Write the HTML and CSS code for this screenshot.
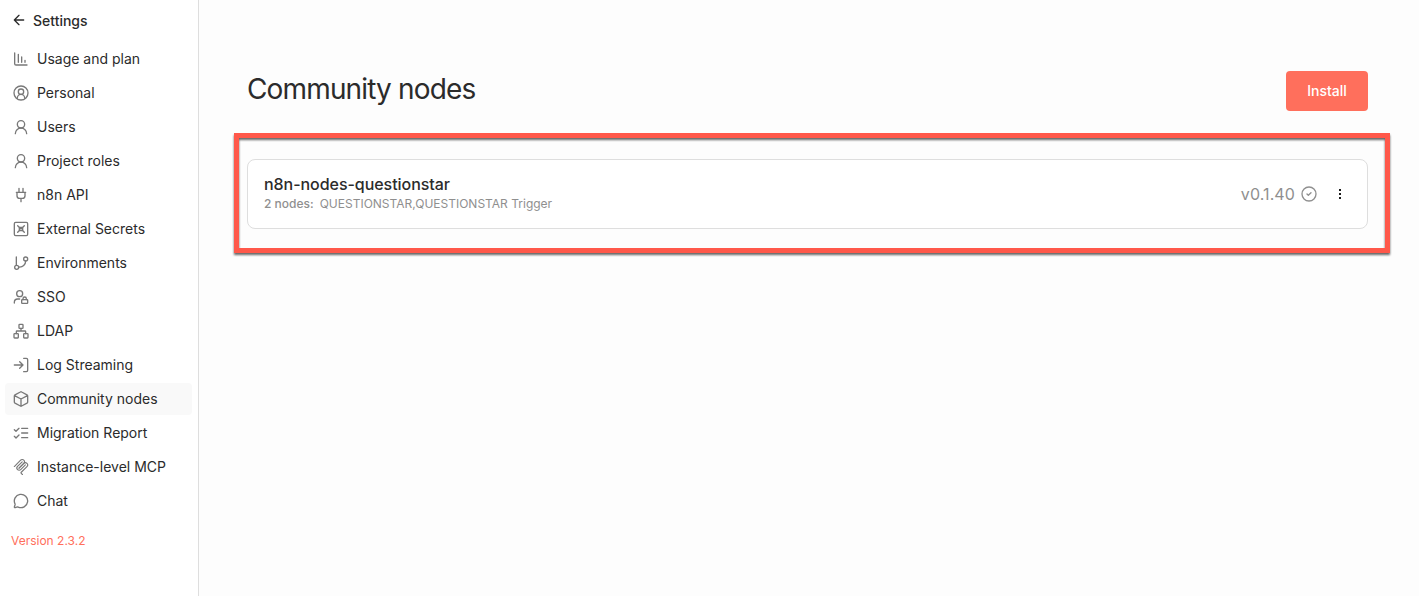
FILE: index.html
```
<!DOCTYPE html>
<html lang="en">

<head>
    <meta charset="UTF-8">
    <meta name="viewport" content="width=device-width, initial-scale=1.0">
    <title>Community nodes</title>
    <link rel="stylesheet" href="styles.css">
</head>

<body>
    <aside class="sidebar">
        <a class="back">
            <svg class="icon" viewBox="0 0 24 24"><path d="m12 19-7-7 7-7M19 12H5"/></svg>
            <span>Settings</span>
        </a>
        <nav class="menu">
            <a class="item">
                <svg class="icon" viewBox="0 0 24 24"><path d="M2.5 3v16a2 2 0 0 0 2 2H21M8 17V5M13 17V9M18 17v-3"/></svg>
                <span>Usage and plan</span>
            </a>
            <a class="item">
                <svg class="icon" viewBox="0 0 24 24"><circle cx="12" cy="12" r="10.5"/><circle cx="12" cy="10" r="4"/><path d="M6.5 20v-.5a5.5 5.5 0 0 1 11 0v.5"/></svg>
                <span>Personal</span>
            </a>
            <a class="item">
                <svg class="icon" viewBox="0 0 24 24"><circle cx="12" cy="8" r="5.5"/><path d="M20.5 22a8.5 8.5 0 0 0-17 0"/></svg>
                <span>Users</span>
            </a>
            <a class="item">
                <svg class="icon" viewBox="0 0 24 24"><circle cx="12" cy="8" r="5.5"/><path d="M20.5 22a8.5 8.5 0 0 0-17 0"/></svg>
                <span>Project roles</span>
            </a>
            <a class="item">
                <svg class="icon" viewBox="0 0 24 24"><path d="M12 22v-5M9 8V2M15 8V2M18 8v5a4 4 0 0 1-4 4h-4a4 4 0 0 1-4-4V8M5 8h14"/></svg>
                <span>n8n API</span>
            </a>
            <a class="item">
                <svg class="icon" viewBox="0 0 24 24"><rect x="2" y="2" width="20" height="20" rx="2"/><path d="m7 7 10 10M17 7 7 17"/><rect x="9.5" y="9.5" width="5" height="5" rx="1"/></svg>
                <span>External Secrets</span>
            </a>
            <a class="item">
                <svg class="icon" viewBox="0 0 24 24"><path d="M5 3v12M19 9a9 9 0 0 1-10 9"/><circle cx="19" cy="6" r="3"/><circle cx="5.5" cy="18.5" r="3"/></svg>
                <span>Environments</span>
            </a>
            <a class="item">
                <svg class="icon" viewBox="0 0 24 24"><circle cx="10" cy="7" r="4.5"/><path d="M10 15H7a5 5 0 0 0-5 5v1M15 16v-1.5a2.5 2.5 0 0 1 5 0V16"/><rect x="13" y="16" width="9" height="5.5" rx=".9"/></svg>
                <span>SSO</span>
            </a>
            <a class="item">
                <svg class="icon" viewBox="0 0 24 24"><rect x="16" y="16" width="6.5" height="6.5" rx="1"/><rect x="1.5" y="16" width="6.5" height="6.5" rx="1"/><rect x="9" y="2" width="6" height="6" rx="1"/><path d="M5 16v-3a1 1 0 0 1 1-1h12a1 1 0 0 1 1 1v3M12 12V8"/></svg>
                <span>LDAP</span>
            </a>
            <a class="item">
                <svg class="icon" viewBox="0 0 24 24"><path d="M16 2h4a2 2 0 0 1 2 2v16a2 2 0 0 1-2 2h-4M10 17l5-5-5-5M15 12H2"/></svg>
                <span>Log Streaming</span>
            </a>
            <a class="item active">
                <svg class="icon" viewBox="0 0 24 24"><path d="M22 7.5a2 2 0 0 0-1-1.73l-8-4.3a2 2 0 0 0-2 0l-8 4.3A2 2 0 0 0 2 7.5v9a2 2 0 0 0 1 1.73l8 4.3a2 2 0 0 0 2 0l8-4.3A2 2 0 0 0 22 16.5ZM2.3 7l9.7 5 9.7-5M12 22V12"/></svg>
                <span>Community nodes</span>
            </a>
            <a class="item">
                <svg class="icon" viewBox="0 0 24 24"><path d="M13 5h9M13 12h9M13 19h9M2 17l2.5 2.5L9 15M2 7l2.5 2.5L9 5"/></svg>
                <span>Migration Report</span>
            </a>
            <a class="item">
                <svg class="icon icon-mcp" viewBox="4 4 172 172"><path d="M18 84.85 85.88 16.97c9.37-9.37 24.57-9.37 33.94 0s9.37 24.57 0 33.94L68.56 102.18"/><path d="m69.27 101.47 50.55-50.56c9.37-9.37 24.57-9.37 33.94 0l.36.36c9.37 9.37 9.37 24.57 0 33.94L92.72 146.6a8 8 0 0 0 0 11.31l12.61 12.61"/><path d="M102.85 33.94 52.65 84.15c-9.37 9.37-9.37 24.57 0 33.94s24.57 9.37 33.94 0l50.2-50.21"/></svg>
                <span>Instance-level MCP</span>
            </a>
            <a class="item">
                <svg class="icon" viewBox="0 0 24 24"><path d="M2.99 16.34a2 2 0 0 1 .1 1.17l-1.06 3.28a1 1 0 0 0 1.24 1.17l3.4-1a2 2 0 0 1 1.1.09 10 10 0 1 0-4.78-4.71"/></svg>
                <span>Chat</span>
            </a>
        </nav>
        <a class="version">Version 2.3.2</a>
    </aside>

    <main class="content">
        <header class="heading">
            <h1>Community nodes</h1>
            <button class="install">Install</button>
        </header>
        <section class="packages">
            <div class="card">
                <div class="info">
                    <h2>n8n-nodes-questionstar</h2>
                    <p><b>2 nodes:</b><span>QUESTIONSTAR,QUESTIONSTAR Trigger</span></p>
                </div>
                <div class="actions">
                    <span class="number">v0.1.40</span>
                    <svg class="icon check" viewBox="0 0 24 24"><circle cx="12" cy="12" r="10.5"/><path d="m9 12 2 2 4-4"/></svg>
                    <svg class="dots" viewBox="0 0 16 16"><path d="M7 3h2v2H7zM7 7h2v2H7zM7 11h2v2H7z"/></svg>
                </div>
            </div>
        </section>
    </main>
</body>

</html>
```

FILE: styles.css
```
* {
    box-sizing: border-box;
}

body {
    display: flex;
    margin: 0;
    height: 596px;
    background-color: #fdfdfd;
    color: #2b2b2b;
    font-family: Inter, sans-serif;
    font-size: 14px;
    overflow: hidden;
}

h1,
h2,
p {
    margin: 0;
}

.sidebar {
    width: 199px;
    padding: 10px 6px 0 5px;
    background-color: #fff;
    border-right: 1px solid #dedede;
}

.icon {
    width: 16px;
    height: 16px;
    flex-shrink: 0;
    fill: none;
    stroke: #787878;
    stroke-width: 2;
    stroke-linecap: round;
    stroke-linejoin: round;
}

.icon-mcp {
    stroke-width: 12;
}

.back {
    display: flex;
    align-items: center;
    gap: 6px;
    height: 20px;
    padding-left: 6px;
    font-weight: 500;
}

.back .icon {
    stroke: #2b2b2b;
}

.menu {
    display: flex;
    flex-direction: column;
    gap: 2px;
    margin-top: 13px;
}

.item {
    display: flex;
    align-items: center;
    gap: 8px;
    height: 32px;
    padding: 0 8px;
    border-radius: 4px;
}

.item span {
    padding-bottom: 2px;
}

.item.active {
    background-color: #f9f9f9;
}

.version {
    display: block;
    margin: 16px 0 0 6px;
    color: #ff6f5c;
    font-size: 12px;
    line-height: 16px;
}

.content {
    flex: 1;
    padding: 71px 51px 0 48px;
}

.heading {
    display: flex;
    justify-content: space-between;
    height: 40px;
}

.heading h1 {
    font-size: 28px;
    font-weight: 400;
    letter-spacing: -0.85px;
    line-height: 36px;
}

.install {
    width: 82px;
    height: 40px;
    padding: 0 0 2px;
    border: 0;
    border-radius: 4px;
    background-color: #ff6f5c;
    color: #fff;
    font: 500 14px Inter, sans-serif;
}

.packages {
    position: relative;
    margin-top: 48px;
}

/* red frame around the package list */
.packages::after {
    content: "";
    position: absolute;
    inset: -26px -22px -24px -13px;
    border: 5px solid #ff584a;
    filter: drop-shadow(0 2.5px 0.8px rgba(0, 0, 0, 0.6));
    pointer-events: none;
}

.card {
    display: flex;
    align-items: center;
    justify-content: space-between;
    height: 70px;
    padding: 0 19px 0 16px;
    background-color: #fff;
    border: 1px solid #dedede;
    border-radius: 8px;
}

.info h2 {
    margin-top: -2px;
    font-size: 16px;
    font-weight: 500;
    letter-spacing: -0.05px;
    line-height: 20px;
}

.info p {
    display: flex;
    gap: 6px;
    margin-top: 1px;
    color: #8f8f8f;
    font-size: 12px;
    line-height: 18px;
}

.info b {
    font-weight: 500;
}

.actions {
    display: flex;
    align-items: center;
}

.number {
    color: #8f8f8f;
    font-size: 16px;
    letter-spacing: 0.1px;
}

.check {
    margin: 0 15px 0 6px;
    stroke: #8f8f8f;
}

.dots {
    width: 16px;
    height: 16px;
    fill: #1c1c1c;
}
```
